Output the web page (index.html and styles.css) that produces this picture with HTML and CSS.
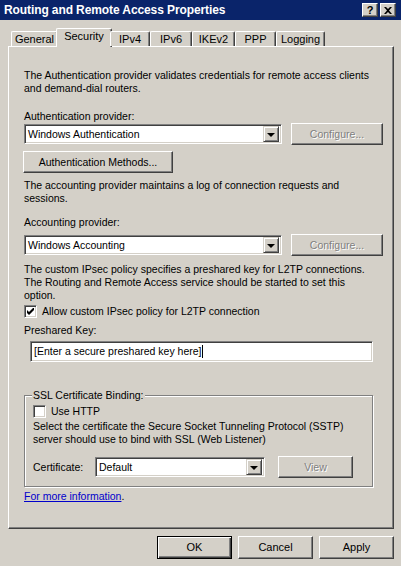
FILE: index.html
```html
<!DOCTYPE html>
<html lang="en">

<head>
    <meta charset="UTF-8">
    <title>Routing and Remote Access Properties</title>
    <link rel="stylesheet" href="styles.css">
</head>

<body>
    <div class="dialog">
        <div class="titlebar">
            <span class="title">Routing and Remote Access Properties</span>
            <div class="title-btns">
                <span class="tbtn help">?</span>
                <span class="tbtn">
                    <svg width="8" height="7" viewBox="0 0 8 7">
                        <path d="M0 0h2l2 2 2-2h2L5 3.5 8 7H6L4 5 2 7H0l3-3.5z" fill="#000"/>
                    </svg>
                </span>
            </div>
        </div>

        <div class="tabs">
            <span class="tab t-general">General</span>
            <span class="tab active t-security">Security</span>
            <span class="tab t-ipv4">IPv4</span>
            <span class="tab t-ipv6">IPv6</span>
            <span class="tab t-ikev2">IKEv2</span>
            <span class="tab t-ppp">PPP</span>
            <span class="tab t-logging">Logging</span>
        </div>

        <div class="panel">
            <p class="text">The Authentication provider validates credentials for remote access clients<br>and demand-dial routers.</p>

            <div class="label lbl-auth">Authentication provider:</div>
            <div class="row">
                <div class="combo combo-wide">
                    <span class="combo-value">Windows Authentication</span>
                    <span class="drop"><i class="arrow"></i></span>
                </div>
                <span class="btn disabled btn-config">Configure...</span>
            </div>
            <span class="btn btn-methods">Authentication Methods...</span>

            <p class="text text-acct">The accounting provider maintains a log of connection requests and<br>sessions.</p>

            <div class="label lbl-acct">Accounting provider:</div>
            <div class="row row-acct">
                <div class="combo combo-wide">
                    <span class="combo-value">Windows Accounting</span>
                    <span class="drop"><i class="arrow"></i></span>
                </div>
                <span class="btn disabled btn-config">Configure...</span>
            </div>

            <p class="text text-ipsec">The custom IPsec policy specifies a preshared key for L2TP connections.<br>The Routing and Remote Access service should be started to set this<br>option.</p>

            <label class="check check-ipsec">
                <span class="box">
                    <svg width="7" height="7" viewBox="0 0 7 7">
                        <path d="M0 2v3l2 2 5-5V-1L2 4z" fill="#000"/>
                    </svg>
                </span>
                Allow custom IPsec policy for L2TP connection
            </label>

            <div class="label lbl-key">Preshared Key:</div>
            <div class="input">[Enter a secure preshared key here]<span class="caret"></span></div>

            <fieldset class="group">
                <legend>SSL Certificate Binding:</legend>
                <label class="check">
                    <span class="box"></span>
                    Use HTTP
                </label>
                <p class="text text-sstp">Select the certificate the Secure Socket Tunneling Protocol (SSTP)<br>server should use to bind with SSL (Web Listener)</p>
                <div class="row row-cert">
                    <span class="cert-label">Certificate:</span>
                    <div class="combo combo-cert">
                        <span class="combo-value">Default</span>
                        <span class="drop"><i class="arrow"></i></span>
                    </div>
                    <span class="btn disabled btn-view">View</span>
                </div>
            </fieldset>

            <div class="more"><a href="#">For more information</a>.</div>
        </div>

        <div class="actions">
            <span class="btn btn-action default">OK</span>
            <span class="btn btn-action">Cancel</span>
            <span class="btn btn-action">Apply</span>
        </div>
    </div>
</body>

</html>
```

FILE: styles.css
```css
* {
    margin: 0;
    padding: 0;
    box-sizing: border-box;
}

body {
    width: 401px;
    height: 566px;
    background: #d4d0c8;
    font-family: "Liberation Sans", Arial, sans-serif;
    font-size: 10.5px;
    line-height: 13px;
    color: #000;
    overflow: hidden;
}

.dialog {
    width: 401px;
    height: 566px;
    display: flex;
    flex-direction: column;
}

/* 标题栏 */
.titlebar {
    height: 20px;
    background: #0a246a;
    display: flex;
    align-items: center;
    justify-content: space-between;
    padding: 0 5px 0 4px;
}

.title {
    color: #fff;
    font-weight: bold;
    font-size: 12px;
    letter-spacing: -0.1px;
}

.title-btns {
    display: flex;
    gap: 2px;
}

.tbtn {
    width: 16px;
    height: 14px;
    background: #d4d0c8;
    border: 1px solid;
    border-color: #fff #404040 #404040 #fff;
    box-shadow: inset -1px -1px #808080;
    display: flex;
    align-items: center;
    justify-content: center;
}

.tbtn.help {
    font-weight: bold;
    font-size: 11px;
    line-height: 12px;
}

/* 选项卡 */
.tabs {
    height: 27px;
    display: flex;
    align-items: flex-end;
    padding-left: 11px;
    margin-bottom: -1px;
    position: relative;
    z-index: 1;
    font-size: 11px;
}

.tab {
    height: 15px;
    margin-bottom: 1px;
    border: 1px solid;
    border-bottom: none;
    border-color: #fff #404040 #404040 #fff;
    border-radius: 2px 2px 0 0;
    box-shadow: inset -1px 0 #808080;
    background: #d4d0c8;
    text-align: center;
    line-height: 14px;
}

.tab.active {
    height: 19px;
    margin: 0 -2px;
    line-height: 15px;
}

.t-general { width: 47px; }
.t-security { width: 56px; }
.t-ipv4 { width: 40px; }
.t-ipv6 { width: 42px; }
.t-ikev2 { width: 43px; }
.t-ppp { width: 41px; }
.t-logging { width: 49px; }

/* 面板 */
.panel {
    margin-left: 8px;
    width: 386px;
    height: 483px;
    border: 1px solid;
    border-color: #fff #404040 #404040 #fff;
    box-shadow: inset -1px -1px #808080;
    padding: 22px 0 0 15px;
}

.text {
    width: 362px;
    white-space: nowrap;
}

.label {
    height: 13px;
}

.lbl-auth {
    margin-top: 15px;
}

.lbl-acct {
    margin-top: 11px;
}

.lbl-key {
    margin-top: 6px;
}

.row {
    display: flex;
    align-items: center;
    height: 22px;
}

.row-acct {
    margin-top: 5px;
}

.combo {
    height: 20px;
    background: #fff;
    border: 1px solid;
    border-color: #808080 #fff #fff #808080;
    box-shadow: inset 1px 1px #404040, inset -1px -1px #d4d0c8;
    display: flex;
    align-items: center;
    justify-content: space-between;
    padding: 0 2px 0 3px;
}

.combo-wide {
    width: 258px;
    margin-right: 9px;
}

.drop {
    width: 16px;
    height: 16px;
    background: #d4d0c8;
    border: 1px solid;
    border-color: #d4d0c8 #404040 #404040 #d4d0c8;
    box-shadow: inset 1px 1px #fff, inset -1px -1px #808080;
    display: flex;
    align-items: center;
    justify-content: center;
}

.arrow {
    width: 0;
    height: 0;
    border-left: 4px solid transparent;
    border-right: 4px solid transparent;
    border-top: 4px solid #000;
    margin-top: 1px;
}

.btn {
    height: 22px;
    background: #d4d0c8;
    border: 1px solid;
    border-color: #fff #404040 #404040 #fff;
    box-shadow: inset -1px -1px #808080;
    display: flex;
    align-items: center;
    justify-content: center;
    cursor: default;
}

.btn.disabled {
    color: #808080;
    text-shadow: 1px 1px #fff;
}

.btn-config {
    width: 92px;
}

.btn-methods {
    width: 150px;
    margin: 6px 0 0 -1px;
}

.text-acct {
    margin-top: 6px;
}

.text-ipsec {
    margin-top: 7px;
}

.check {
    display: flex;
    align-items: center;
    gap: 5px;
    height: 13px;
}

.check-ipsec {
    margin-top: 3px;
}

.box {
    width: 13px;
    height: 13px;
    background: #fff;
    border: 1px solid;
    border-color: #808080 #fff #fff #808080;
    box-shadow: inset 1px 1px #404040, inset -1px -1px #d4d0c8;
    display: flex;
    align-items: center;
    justify-content: center;
}

.input {
    margin: 4px 0 0 6px;
    width: 343px;
    height: 21px;
    background: #fff;
    border: 1px solid;
    border-color: #808080 #fff #fff #808080;
    box-shadow: inset 1px 1px #404040, inset -1px -1px #d4d0c8;
    padding: 3px 0 0 3px;
    display: flex;
}

.caret {
    width: 1px;
    height: 13px;
    background: #000;
}

/* 分组框 */
.group {
    margin-top: 27px;
    width: 349px;
    height: 98px;
    border: 1px solid #808080;
    box-shadow: inset 1px 1px #fff, 1px 1px #fff;
    padding: 3px 0 0 8px;
}

.group legend {
    margin-left: -1px;
    padding: 0 1px;
    background: #d4d0c8;
}

.text-sstp {
    margin-top: 2px;
    width: 335px;
}

.row-cert {
    margin-top: 10px;
}

.cert-label {
    width: 62px;
}

.combo-cert {
    width: 170px;
    margin-right: 13px;
}

.btn-view {
    width: 75px;
}

.more {
    margin-top: 3px;
}

.more a {
    color: #0000cc;
}

/* 底部按钮 */
.actions {
    display: flex;
    justify-content: flex-end;
    gap: 6px;
    padding: 7px 7px 0 0;
    font-size: 11px;
}

.btn-action {
    width: 75px;
    height: 23px;
}

.btn-action.default {
    border: 1px solid #000;
    box-shadow: inset 1px 1px #fff, inset -1px -1px #404040, inset -2px -2px #808080;
}
```
